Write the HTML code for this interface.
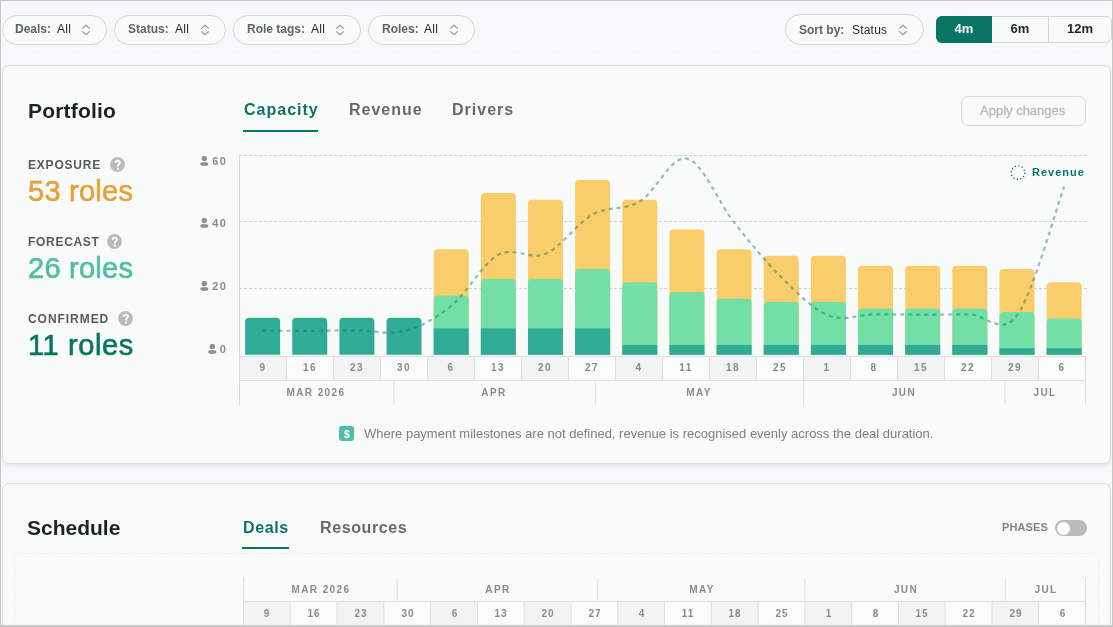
<!DOCTYPE html>
<html><head><meta charset="utf-8"><style>
html,body{margin:0;padding:0;}
body{width:1113px;height:627px;overflow:hidden;position:relative;background:#f6f9f9;font-family:"Liberation Sans", sans-serif;}
.t{position:absolute;white-space:nowrap;will-change:transform;}
.b{position:absolute;}
#frame{position:absolute;left:0;top:0;width:1113px;height:627px;box-sizing:border-box;border:1px solid #c6c8c8;border-bottom:2px solid #c9cbcb;pointer-events:none;}
</style></head><body>
<div class="b" style="left:2px;top:52px;width:1108px;height:0px;border-top:1px dashed #eff3f2;"></div><div class="b" style="left:2px;top:476px;width:1108px;height:0px;border-top:1px dashed #f1f4f4;"></div><div class="b" style="left:2px;top:15px;width:105px;height:30px;border:1px solid #d3d7d7;border-radius:15px;background:#f9fafa;box-sizing:border-box;"></div><div class="t" style="left:14.50px;top:22.84px;font-size:12px;line-height:12px;color:#5d6564;font-weight:bold;">Deals:</div><div class="t" style="left:57.00px;top:22.84px;font-size:12px;line-height:12px;color:#1e2626;font-weight:normal;letter-spacing:0.3px;">All</div><svg class="b" style="left:81px;top:24px" width="10" height="12" viewBox="0 0 10 12"><path d="M1.2 4.6 L5 1.3 L8.8 4.6 M1.2 7.4 L5 10.7 L8.8 7.4" fill="none" stroke="#8c9392" stroke-width="1.1"/></svg><div class="b" style="left:114px;top:15px;width:112px;height:30px;border:1px solid #d3d7d7;border-radius:15px;background:#f9fafa;box-sizing:border-box;"></div><div class="t" style="left:127.60px;top:22.84px;font-size:12px;line-height:12px;color:#5d6564;font-weight:bold;">Status:</div><div class="t" style="left:175.40px;top:22.84px;font-size:12px;line-height:12px;color:#1e2626;font-weight:normal;letter-spacing:0.3px;">All</div><svg class="b" style="left:200px;top:24px" width="10" height="12" viewBox="0 0 10 12"><path d="M1.2 4.6 L5 1.3 L8.8 4.6 M1.2 7.4 L5 10.7 L8.8 7.4" fill="none" stroke="#8c9392" stroke-width="1.1"/></svg><div class="b" style="left:233px;top:15px;width:128px;height:30px;border:1px solid #d3d7d7;border-radius:15px;background:#f9fafa;box-sizing:border-box;"></div><div class="t" style="left:246.70px;top:22.84px;font-size:12px;line-height:12px;color:#5d6564;font-weight:bold;">Role tags:</div><div class="t" style="left:310.70px;top:22.84px;font-size:12px;line-height:12px;color:#1e2626;font-weight:normal;letter-spacing:0.3px;">All</div><svg class="b" style="left:335px;top:24px" width="10" height="12" viewBox="0 0 10 12"><path d="M1.2 4.6 L5 1.3 L8.8 4.6 M1.2 7.4 L5 10.7 L8.8 7.4" fill="none" stroke="#8c9392" stroke-width="1.1"/></svg><div class="b" style="left:368px;top:15px;width:107px;height:30px;border:1px solid #d3d7d7;border-radius:15px;background:#f9fafa;box-sizing:border-box;"></div><div class="t" style="left:382.00px;top:22.84px;font-size:12px;line-height:12px;color:#5d6564;font-weight:bold;">Roles:</div><div class="t" style="left:424.00px;top:22.84px;font-size:12px;line-height:12px;color:#1e2626;font-weight:normal;letter-spacing:0.3px;">All</div><svg class="b" style="left:449px;top:24px" width="10" height="12" viewBox="0 0 10 12"><path d="M1.2 4.6 L5 1.3 L8.8 4.6 M1.2 7.4 L5 10.7 L8.8 7.4" fill="none" stroke="#8c9392" stroke-width="1.1"/></svg><div class="b" style="left:785px;top:14px;width:139px;height:31px;border:1px solid #d3d7d7;border-radius:16px;background:#f9fafa;box-sizing:border-box;"></div><div class="t" style="left:798.70px;top:23.84px;font-size:12px;line-height:12px;color:#5d6564;font-weight:bold;">Sort by:</div><div class="t" style="left:851.90px;top:23.84px;font-size:12px;line-height:12px;color:#1e2626;font-weight:normal;letter-spacing:0.2px;">Status</div><svg class="b" style="left:898px;top:24px" width="10" height="12" viewBox="0 0 10 12"><path d="M1.2 4.6 L5 1.3 L8.8 4.6 M1.2 7.4 L5 10.7 L8.8 7.4" fill="none" stroke="#8c9392" stroke-width="1.1"/></svg><div class="b" style="left:936px;top:16px;width:176px;height:27px;border:1px solid #d3d7d7;border-radius:6px;background:#f9fafa;box-sizing:border-box;"></div><div class="b" style="left:936px;top:16px;width:56px;height:27px;background:#077561;border-radius:6px 0 0 6px;"></div><div class="b" style="left:1048px;top:16px;width:1px;height:27px;background:#d3d7d7;"></div><div class="t" style="left:764.00px;width:400px;text-align:center;top:21.80px;font-size:13px;line-height:13px;color:#ffffff;font-weight:bold;">4m</div><div class="t" style="left:820.00px;width:400px;text-align:center;top:21.80px;font-size:13px;line-height:13px;color:#1e2626;font-weight:bold;">6m</div><div class="t" style="left:880.00px;width:400px;text-align:center;top:21.80px;font-size:13px;line-height:13px;color:#1e2626;font-weight:bold;">12m</div><div class="b" style="left:2px;top:65px;width:1109px;height:398.5px;border:1px solid #dadede;border-radius:7px;background:#f9fbfb;box-sizing:border-box;box-shadow:0 2px 5px rgba(0,0,0,0.08);"></div><div class="t" style="left:28.30px;top:100.02px;font-size:21px;line-height:21px;color:#1b2322;font-weight:bold;letter-spacing:0.2px;">Portfolio</div><div class="t" style="left:243.50px;top:101.86px;font-size:16px;line-height:16px;color:#0b7563;font-weight:bold;letter-spacing:1px;">Capacity</div><div class="b" style="left:243px;top:130px;width:75px;height:2px;background:#0b7563;"></div><div class="t" style="left:348.50px;top:101.86px;font-size:16px;line-height:16px;color:#646b6a;font-weight:bold;letter-spacing:1px;">Revenue</div><div class="t" style="left:452.00px;top:101.86px;font-size:16px;line-height:16px;color:#646b6a;font-weight:bold;letter-spacing:1px;">Drivers</div><div class="b" style="left:961px;top:96px;width:125px;height:30px;border:1px solid #d6dada;border-radius:7px;box-sizing:border-box;"></div><div class="t" style="left:980.40px;top:103.50px;font-size:13px;line-height:13px;color:#b5bab9;font-weight:normal;-webkit-text-stroke:0.3px #b5bab9;">Apply changes</div><div class="t" style="left:28.00px;top:158.74px;font-size:12px;line-height:12px;color:#545c5b;font-weight:bold;letter-spacing:0.8px;">EXPOSURE</div><svg class="b" style="left:109.6px;top:157.2px" width="15" height="15" viewBox="0 0 15 15"><circle cx="7.5" cy="7.5" r="7.4" fill="#b7bbba"/><path d="M5.7 5.8 C5.7 4.4 6.6 3.6 7.8 3.6 C9.0 3.6 9.9 4.4 9.9 5.6 C9.9 7.1 7.9 7.3 7.9 8.9 L7.9 9.4" fill="none" stroke="#fff" stroke-width="1.8"/><circle cx="7.9" cy="11.6" r="1.15" fill="#fff"/></svg><div class="t" style="left:27.50px;top:177.15px;font-size:29px;line-height:29px;color:#e3a33b;font-weight:normal;letter-spacing:0.25px;-webkit-text-stroke:0.65px #e3a33b;">53 roles</div><div class="t" style="left:28.00px;top:235.94px;font-size:12px;line-height:12px;color:#545c5b;font-weight:bold;letter-spacing:0.7px;">FORECAST</div><svg class="b" style="left:106.6px;top:233.9px" width="15" height="15" viewBox="0 0 15 15"><circle cx="7.5" cy="7.5" r="7.4" fill="#b7bbba"/><path d="M5.7 5.8 C5.7 4.4 6.6 3.6 7.8 3.6 C9.0 3.6 9.9 4.4 9.9 5.6 C9.9 7.1 7.9 7.3 7.9 8.9 L7.9 9.4" fill="none" stroke="#fff" stroke-width="1.8"/><circle cx="7.9" cy="11.6" r="1.15" fill="#fff"/></svg><div class="t" style="left:27.50px;top:253.85px;font-size:29px;line-height:29px;color:#4fbea4;font-weight:normal;letter-spacing:0.25px;-webkit-text-stroke:0.65px #4fbea4;">26 roles</div><div class="t" style="left:28.00px;top:313.04px;font-size:12px;line-height:12px;color:#545c5b;font-weight:bold;letter-spacing:0.95px;">CONFIRMED</div><svg class="b" style="left:117.6px;top:311.4px" width="15" height="15" viewBox="0 0 15 15"><circle cx="7.5" cy="7.5" r="7.4" fill="#b7bbba"/><path d="M5.7 5.8 C5.7 4.4 6.6 3.6 7.8 3.6 C9.0 3.6 9.9 4.4 9.9 5.6 C9.9 7.1 7.9 7.3 7.9 8.9 L7.9 9.4" fill="none" stroke="#fff" stroke-width="1.8"/><circle cx="7.9" cy="11.6" r="1.15" fill="#fff"/></svg><div class="t" style="left:27.50px;top:331.25px;font-size:29px;line-height:29px;color:#0b7563;font-weight:normal;letter-spacing:0.6px;-webkit-text-stroke:0.65px #0b7563;">11 roles</div><svg class="b" style="left:0;top:0" width="1113" height="627"><line x1="239" y1="155.5" x2="1088" y2="155.5" stroke="#ced2d2" stroke-width="1" stroke-dasharray="3 2"/><line x1="239" y1="221.5" x2="1088" y2="221.5" stroke="#ced2d2" stroke-width="1" stroke-dasharray="3 2"/><line x1="239" y1="288.5" x2="1088" y2="288.5" stroke="#ced2d2" stroke-width="1" stroke-dasharray="3 2"/><line x1="239.5" y1="155" x2="239.5" y2="405" stroke="#d5d9d9" stroke-width="1"/><path d="M245.1 354.8 L245.1 321.68 Q245.1 317.68 249.1 317.68 L276.1 317.68 Q280.1 317.68 280.1 321.68 L280.1 354.8 Z" fill="#30ab96"/><path d="M292.25 354.8 L292.25 321.68 Q292.25 317.68 296.25 317.68 L323.25 317.68 Q327.25 317.68 327.25 321.68 L327.25 354.8 Z" fill="#30ab96"/><path d="M339.4 354.8 L339.4 321.68 Q339.4 317.68 343.4 317.68 L370.4 317.68 Q374.4 317.68 374.4 321.68 L374.4 354.8 Z" fill="#30ab96"/><path d="M386.55 354.8 L386.55 321.68 Q386.55 317.68 390.55 317.68 L417.55 317.68 Q421.55 317.68 421.55 321.68 L421.55 354.8 Z" fill="#30ab96"/><path d="M433.7 354.79999999999995 L433.7 253.2 Q433.7 249.2 437.7 249.2 L464.7 249.2 Q468.7 249.2 468.7 253.2 L468.7 354.79999999999995 Z" fill="#f9cd6a"/><path d="M433.7 354.79999999999995 L433.7 299.4 Q433.7 295.4 437.7 295.4 L464.7 295.4 Q468.7 295.4 468.7 299.4 L468.7 354.79999999999995 Z" fill="#72dfa7"/><rect x="433.70" y="328.40" width="35" height="26.40" fill="#30ab96"/><path d="M480.85 354.79999999999995 L480.85 197.1 Q480.85 193.1 484.85 193.1 L511.85 193.1 Q515.85 193.1 515.85 197.1 L515.85 354.79999999999995 Z" fill="#f9cd6a"/><path d="M480.85 354.79999999999995 L480.85 282.9 Q480.85 278.9 484.85 278.9 L511.85 278.9 Q515.85 278.9 515.85 282.9 L515.85 354.79999999999995 Z" fill="#72dfa7"/><rect x="480.85" y="328.40" width="35" height="26.40" fill="#30ab96"/><path d="M528.0 354.79999999999995 L528.0 203.7 Q528.0 199.7 532.0 199.7 L559.0 199.7 Q563.0 199.7 563.0 203.7 L563.0 354.79999999999995 Z" fill="#f9cd6a"/><path d="M528.0 354.79999999999995 L528.0 282.9 Q528.0 278.9 532.0 278.9 L559.0 278.9 Q563.0 278.9 563.0 282.9 L563.0 354.79999999999995 Z" fill="#72dfa7"/><rect x="528.00" y="328.40" width="35" height="26.40" fill="#30ab96"/><path d="M575.15 354.8 L575.15 183.9 Q575.15 179.9 579.15 179.9 L606.15 179.9 Q610.15 179.9 610.15 183.9 L610.15 354.8 Z" fill="#f9cd6a"/><path d="M575.15 354.8 L575.15 273.0 Q575.15 269.0 579.15 269.0 L606.15 269.0 Q610.15 269.0 610.15 273.0 L610.15 354.8 Z" fill="#72dfa7"/><rect x="575.15" y="328.40" width="35" height="26.40" fill="#30ab96"/><path d="M622.3 354.79999999999995 L622.3 203.7 Q622.3 199.7 626.3 199.7 L653.3 199.7 Q657.3 199.7 657.3 203.7 L657.3 354.79999999999995 Z" fill="#f9cd6a"/><path d="M622.3 354.79999999999995 L622.3 286.2 Q622.3 282.2 626.3 282.2 L653.3 282.2 Q657.3 282.2 657.3 286.2 L657.3 354.79999999999995 Z" fill="#72dfa7"/><rect x="622.30" y="344.90" width="35" height="9.90" fill="#30ab96"/><path d="M669.45 354.8 L669.45 233.4 Q669.45 229.4 673.45 229.4 L700.45 229.4 Q704.45 229.4 704.45 233.4 L704.45 354.8 Z" fill="#f9cd6a"/><path d="M669.45 354.8 L669.45 296.1 Q669.45 292.1 673.45 292.1 L700.45 292.1 Q704.45 292.1 704.45 296.1 L704.45 354.8 Z" fill="#72dfa7"/><rect x="669.45" y="344.90" width="35" height="9.90" fill="#30ab96"/><path d="M716.6 354.79999999999995 L716.6 253.2 Q716.6 249.2 720.6 249.2 L747.6 249.2 Q751.6 249.2 751.6 253.2 L751.6 354.79999999999995 Z" fill="#f9cd6a"/><path d="M716.6 354.8 L716.6 302.7 Q716.6 298.7 720.6 298.7 L747.6 298.7 Q751.6 298.7 751.6 302.7 L751.6 354.8 Z" fill="#72dfa7"/><rect x="716.60" y="344.90" width="35" height="9.90" fill="#30ab96"/><path d="M763.75 354.8 L763.75 259.8 Q763.75 255.8 767.75 255.8 L794.75 255.8 Q798.75 255.8 798.75 259.8 L798.75 354.8 Z" fill="#f9cd6a"/><path d="M763.75 354.8 L763.75 306.0 Q763.75 302.0 767.75 302.0 L794.75 302.0 Q798.75 302.0 798.75 306.0 L798.75 354.8 Z" fill="#72dfa7"/><rect x="763.75" y="344.90" width="35" height="9.90" fill="#30ab96"/><path d="M810.9 354.8 L810.9 259.8 Q810.9 255.8 814.9 255.8 L841.9 255.8 Q845.9 255.8 845.9 259.8 L845.9 354.8 Z" fill="#f9cd6a"/><path d="M810.9 354.8 L810.9 306.0 Q810.9 302.0 814.9 302.0 L841.9 302.0 Q845.9 302.0 845.9 306.0 L845.9 354.8 Z" fill="#72dfa7"/><rect x="810.90" y="344.90" width="35" height="9.90" fill="#30ab96"/><path d="M858.05 354.79999999999995 L858.05 269.7 Q858.05 265.7 862.05 265.7 L889.05 265.7 Q893.05 265.7 893.05 269.7 L893.05 354.79999999999995 Z" fill="#f9cd6a"/><path d="M858.05 354.8 L858.05 312.6 Q858.05 308.6 862.05 308.6 L889.05 308.6 Q893.05 308.6 893.05 312.6 L893.05 354.8 Z" fill="#72dfa7"/><rect x="858.05" y="344.90" width="35" height="9.90" fill="#30ab96"/><path d="M905.2 354.79999999999995 L905.2 269.7 Q905.2 265.7 909.2 265.7 L936.2 265.7 Q940.2 265.7 940.2 269.7 L940.2 354.79999999999995 Z" fill="#f9cd6a"/><path d="M905.2 354.8 L905.2 312.6 Q905.2 308.6 909.2 308.6 L936.2 308.6 Q940.2 308.6 940.2 312.6 L940.2 354.8 Z" fill="#72dfa7"/><rect x="905.20" y="344.90" width="35" height="9.90" fill="#30ab96"/><path d="M952.35 354.79999999999995 L952.35 269.7 Q952.35 265.7 956.35 265.7 L983.35 265.7 Q987.35 265.7 987.35 269.7 L987.35 354.79999999999995 Z" fill="#f9cd6a"/><path d="M952.35 354.8 L952.35 312.6 Q952.35 308.6 956.35 308.6 L983.35 308.6 Q987.35 308.6 987.35 312.6 L987.35 354.8 Z" fill="#72dfa7"/><rect x="952.35" y="344.90" width="35" height="9.90" fill="#30ab96"/><path d="M999.5 354.8 L999.5 273.0 Q999.5 269.0 1003.5 269.0 L1030.5 269.0 Q1034.5 269.0 1034.5 273.0 L1034.5 354.8 Z" fill="#f9cd6a"/><path d="M999.5 354.79999999999995 L999.5 315.9 Q999.5 311.9 1003.5 311.9 L1030.5 311.9 Q1034.5 311.9 1034.5 315.9 L1034.5 354.79999999999995 Z" fill="#72dfa7"/><rect x="999.50" y="348.20" width="35" height="6.60" fill="#30ab96"/><path d="M1046.65 354.79999999999995 L1046.65 286.2 Q1046.65 282.2 1050.65 282.2 L1077.65 282.2 Q1081.65 282.2 1081.65 286.2 L1081.65 354.79999999999995 Z" fill="#f9cd6a"/><path d="M1046.65 354.8 L1046.65 322.5 Q1046.65 318.5 1050.65 318.5 L1077.65 318.5 Q1081.65 318.5 1081.65 322.5 L1081.65 354.8 Z" fill="#72dfa7"/><rect x="1046.65" y="348.20" width="35" height="6.60" fill="#30ab96"/><rect x="239.50" y="356" width="47.00" height="24" fill="#f2f4f4"/><rect x="286.50" y="356" width="47.00" height="24" fill="#fafcfc"/><rect x="333.50" y="356" width="47.00" height="24" fill="#f2f4f4"/><rect x="380.50" y="356" width="47.00" height="24" fill="#fafcfc"/><rect x="427.50" y="356" width="47.00" height="24" fill="#f2f4f4"/><rect x="474.50" y="356" width="47.00" height="24" fill="#fafcfc"/><rect x="521.50" y="356" width="47.00" height="24" fill="#f2f4f4"/><rect x="568.50" y="356" width="47.00" height="24" fill="#fafcfc"/><rect x="615.50" y="356" width="47.00" height="24" fill="#f2f4f4"/><rect x="662.50" y="356" width="47.00" height="24" fill="#fafcfc"/><rect x="709.50" y="356" width="47.00" height="24" fill="#f2f4f4"/><rect x="756.50" y="356" width="47.00" height="24" fill="#fafcfc"/><rect x="803.50" y="356" width="47.00" height="24" fill="#f2f4f4"/><rect x="850.50" y="356" width="47.00" height="24" fill="#fafcfc"/><rect x="897.50" y="356" width="47.00" height="24" fill="#f2f4f4"/><rect x="944.50" y="356" width="47.00" height="24" fill="#fafcfc"/><rect x="991.50" y="356" width="47.00" height="24" fill="#f2f4f4"/><rect x="1038.50" y="356" width="47.00" height="24" fill="#fafcfc"/><line x1="239.50" y1="356" x2="239.50" y2="380" stroke="#dde0e0" stroke-width="1"/><line x1="286.50" y1="356" x2="286.50" y2="380" stroke="#dde0e0" stroke-width="1"/><line x1="333.50" y1="356" x2="333.50" y2="380" stroke="#dde0e0" stroke-width="1"/><line x1="380.50" y1="356" x2="380.50" y2="380" stroke="#dde0e0" stroke-width="1"/><line x1="427.50" y1="356" x2="427.50" y2="380" stroke="#dde0e0" stroke-width="1"/><line x1="474.50" y1="356" x2="474.50" y2="380" stroke="#dde0e0" stroke-width="1"/><line x1="521.50" y1="356" x2="521.50" y2="380" stroke="#dde0e0" stroke-width="1"/><line x1="568.50" y1="356" x2="568.50" y2="380" stroke="#dde0e0" stroke-width="1"/><line x1="615.50" y1="356" x2="615.50" y2="380" stroke="#dde0e0" stroke-width="1"/><line x1="662.50" y1="356" x2="662.50" y2="380" stroke="#dde0e0" stroke-width="1"/><line x1="709.50" y1="356" x2="709.50" y2="380" stroke="#dde0e0" stroke-width="1"/><line x1="756.50" y1="356" x2="756.50" y2="380" stroke="#dde0e0" stroke-width="1"/><line x1="803.50" y1="356" x2="803.50" y2="380" stroke="#dde0e0" stroke-width="1"/><line x1="850.50" y1="356" x2="850.50" y2="380" stroke="#dde0e0" stroke-width="1"/><line x1="897.50" y1="356" x2="897.50" y2="380" stroke="#dde0e0" stroke-width="1"/><line x1="944.50" y1="356" x2="944.50" y2="380" stroke="#dde0e0" stroke-width="1"/><line x1="991.50" y1="356" x2="991.50" y2="380" stroke="#dde0e0" stroke-width="1"/><line x1="1038.50" y1="356" x2="1038.50" y2="380" stroke="#dde0e0" stroke-width="1"/><line x1="1085.50" y1="356" x2="1085.50" y2="380" stroke="#dde0e0" stroke-width="1"/><line x1="240" y1="356.5" x2="1085.5" y2="356.5" stroke="#dde0e0" stroke-width="1"/><line x1="240" y1="380.5" x2="1085.5" y2="380.5" stroke="#dde0e0" stroke-width="1"/><line x1="393.93" y1="380" x2="393.93" y2="405" stroke="#dde0e0" stroke-width="1"/><line x1="595.36" y1="380" x2="595.36" y2="405" stroke="#dde0e0" stroke-width="1"/><line x1="803.50" y1="380" x2="803.50" y2="405" stroke="#dde0e0" stroke-width="1"/><line x1="1004.93" y1="380" x2="1004.93" y2="405" stroke="#dde0e0" stroke-width="1"/><line x1="1085.50" y1="380" x2="1085.50" y2="405" stroke="#dde0e0" stroke-width="1"/><path d="M262.60 330.60 C270.46 330.63 294.03 330.85 309.75 330.80 C325.47 330.75 341.18 330.27 356.90 330.30 C372.62 330.33 388.33 335.05 404.05 331.00 C419.77 326.95 435.48 318.70 451.20 306.00 C466.92 293.30 482.63 263.50 498.35 254.80 C514.07 246.10 529.78 260.52 545.50 253.80 C561.22 247.08 576.93 223.22 592.65 214.50 C608.37 205.78 624.08 210.82 639.80 201.50 C655.52 192.18 671.23 155.12 686.95 158.60 C702.67 162.08 718.38 202.63 734.10 222.40 C749.82 242.17 765.53 261.70 781.25 277.20 C796.97 292.70 812.68 309.22 828.40 315.40 C844.12 321.58 859.83 314.43 875.55 314.30 C891.27 314.17 906.98 314.57 922.70 314.60 C938.42 314.63 954.13 314.37 969.85 314.50 C985.57 314.63 1001.28 336.70 1017.00 315.40 C1032.72 294.10 1056.29 208.15 1064.15 186.70" fill="none" stroke="rgba(11,122,102,0.46)" stroke-width="2.2" stroke-dasharray="4 4"/><circle cx="1018" cy="172.6" r="6.8" fill="none" stroke="#0b7563" stroke-width="1.3" stroke-dasharray="1.3 2.26"/></svg><div class="t" style="left:1031.50px;top:166.69px;font-size:11px;line-height:11px;color:#0b7563;font-weight:bold;letter-spacing:1px;">Revenue</div><div class="t" style="left:-173.00px;width:400px;text-align:right;top:156.29px;font-size:11px;line-height:11px;color:#858c8b;font-weight:bold;letter-spacing:1.2px;">60</div><svg class="b" style="left:199.5px;top:156px" width="9" height="10" viewBox="0 0 9 10"><circle cx="4.3" cy="2.5" r="2.7" fill="#8d9392"/><ellipse cx="4.3" cy="8" rx="4.1" ry="1.9" fill="#8d9392"/></svg><div class="t" style="left:-173.00px;width:400px;text-align:right;top:218.09px;font-size:11px;line-height:11px;color:#858c8b;font-weight:bold;letter-spacing:1.2px;">40</div><svg class="b" style="left:199.5px;top:217.8px" width="9" height="10" viewBox="0 0 9 10"><circle cx="4.3" cy="2.5" r="2.7" fill="#8d9392"/><ellipse cx="4.3" cy="8" rx="4.1" ry="1.9" fill="#8d9392"/></svg><div class="t" style="left:-173.00px;width:400px;text-align:right;top:280.89px;font-size:11px;line-height:11px;color:#858c8b;font-weight:bold;letter-spacing:1.2px;">20</div><svg class="b" style="left:199.5px;top:280.6px" width="9" height="10" viewBox="0 0 9 10"><circle cx="4.3" cy="2.5" r="2.7" fill="#8d9392"/><ellipse cx="4.3" cy="8" rx="4.1" ry="1.9" fill="#8d9392"/></svg><div class="t" style="left:-173.00px;width:400px;text-align:right;top:344.29px;font-size:11px;line-height:11px;color:#858c8b;font-weight:bold;letter-spacing:1.2px;">0</div><svg class="b" style="left:207.7px;top:344px" width="9" height="10" viewBox="0 0 9 10"><circle cx="4.3" cy="2.5" r="2.7" fill="#8d9392"/><ellipse cx="4.3" cy="8" rx="4.1" ry="1.9" fill="#8d9392"/></svg><div class="t" style="left:63.00px;width:400px;text-align:center;top:363.14px;font-size:10px;line-height:10px;color:#868d8c;font-weight:bold;letter-spacing:1.4px;">9</div><div class="t" style="left:110.00px;width:400px;text-align:center;top:363.14px;font-size:10px;line-height:10px;color:#868d8c;font-weight:bold;letter-spacing:1.4px;">16</div><div class="t" style="left:157.00px;width:400px;text-align:center;top:363.14px;font-size:10px;line-height:10px;color:#868d8c;font-weight:bold;letter-spacing:1.4px;">23</div><div class="t" style="left:204.00px;width:400px;text-align:center;top:363.14px;font-size:10px;line-height:10px;color:#868d8c;font-weight:bold;letter-spacing:1.4px;">30</div><div class="t" style="left:251.00px;width:400px;text-align:center;top:363.14px;font-size:10px;line-height:10px;color:#868d8c;font-weight:bold;letter-spacing:1.4px;">6</div><div class="t" style="left:298.00px;width:400px;text-align:center;top:363.14px;font-size:10px;line-height:10px;color:#868d8c;font-weight:bold;letter-spacing:1.4px;">13</div><div class="t" style="left:345.00px;width:400px;text-align:center;top:363.14px;font-size:10px;line-height:10px;color:#868d8c;font-weight:bold;letter-spacing:1.4px;">20</div><div class="t" style="left:392.00px;width:400px;text-align:center;top:363.14px;font-size:10px;line-height:10px;color:#868d8c;font-weight:bold;letter-spacing:1.4px;">27</div><div class="t" style="left:439.00px;width:400px;text-align:center;top:363.14px;font-size:10px;line-height:10px;color:#868d8c;font-weight:bold;letter-spacing:1.4px;">4</div><div class="t" style="left:486.00px;width:400px;text-align:center;top:363.14px;font-size:10px;line-height:10px;color:#868d8c;font-weight:bold;letter-spacing:1.4px;">11</div><div class="t" style="left:533.00px;width:400px;text-align:center;top:363.14px;font-size:10px;line-height:10px;color:#868d8c;font-weight:bold;letter-spacing:1.4px;">18</div><div class="t" style="left:580.00px;width:400px;text-align:center;top:363.14px;font-size:10px;line-height:10px;color:#868d8c;font-weight:bold;letter-spacing:1.4px;">25</div><div class="t" style="left:627.00px;width:400px;text-align:center;top:363.14px;font-size:10px;line-height:10px;color:#868d8c;font-weight:bold;letter-spacing:1.4px;">1</div><div class="t" style="left:674.00px;width:400px;text-align:center;top:363.14px;font-size:10px;line-height:10px;color:#868d8c;font-weight:bold;letter-spacing:1.4px;">8</div><div class="t" style="left:721.00px;width:400px;text-align:center;top:363.14px;font-size:10px;line-height:10px;color:#868d8c;font-weight:bold;letter-spacing:1.4px;">15</div><div class="t" style="left:768.00px;width:400px;text-align:center;top:363.14px;font-size:10px;line-height:10px;color:#868d8c;font-weight:bold;letter-spacing:1.4px;">22</div><div class="t" style="left:815.00px;width:400px;text-align:center;top:363.14px;font-size:10px;line-height:10px;color:#868d8c;font-weight:bold;letter-spacing:1.4px;">29</div><div class="t" style="left:862.00px;width:400px;text-align:center;top:363.14px;font-size:10px;line-height:10px;color:#868d8c;font-weight:bold;letter-spacing:1.4px;">6</div><div class="t" style="left:116.41px;width:400px;text-align:center;top:387.54px;font-size:10px;line-height:10px;color:#868d8c;font-weight:bold;letter-spacing:1.4px;">MAR 2026</div><div class="t" style="left:294.34px;width:400px;text-align:center;top:387.54px;font-size:10px;line-height:10px;color:#868d8c;font-weight:bold;letter-spacing:1.4px;">APR</div><div class="t" style="left:499.13px;width:400px;text-align:center;top:387.54px;font-size:10px;line-height:10px;color:#868d8c;font-weight:bold;letter-spacing:1.4px;">MAY</div><div class="t" style="left:703.91px;width:400px;text-align:center;top:387.54px;font-size:10px;line-height:10px;color:#868d8c;font-weight:bold;letter-spacing:1.4px;">JUN</div><div class="t" style="left:844.91px;width:400px;text-align:center;top:387.54px;font-size:10px;line-height:10px;color:#868d8c;font-weight:bold;letter-spacing:1.4px;">JUL</div><div class="b" style="left:339.3px;top:426.3px;width:15px;height:15px;background:#4dbda3;border-radius:3px;"></div><div class="t" style="left:147.00px;width:400px;text-align:center;top:428.71px;font-size:10.5px;line-height:10.5px;color:#ffffff;font-weight:bold;">$</div><div class="t" style="left:364.00px;top:427.30px;font-size:13px;line-height:13px;color:#798180;font-weight:normal;">Where payment milestones are not defined, revenue is recognised evenly across the deal duration.</div><div class="b" style="left:2px;top:483px;width:1109px;height:200px;border:1px solid #dadede;border-radius:7px;background:#f9fbfb;box-sizing:border-box;"></div><div class="b" style="left:14px;top:553px;width:1085px;height:100px;border:1px dashed #eef1f1;border-radius:6px;box-sizing:border-box;"></div><div class="t" style="left:27.00px;top:517.42px;font-size:21px;line-height:21px;color:#1b2322;font-weight:bold;">Schedule</div><div class="t" style="left:242.80px;top:519.96px;font-size:16px;line-height:16px;color:#0b7563;font-weight:bold;letter-spacing:0.6px;">Deals</div><div class="b" style="left:242px;top:547px;width:47px;height:2px;background:#0b7563;"></div><div class="t" style="left:319.60px;top:519.96px;font-size:16px;line-height:16px;color:#646b6a;font-weight:bold;letter-spacing:0.6px;">Resources</div><div class="t" style="left:1002.00px;top:521.69px;font-size:11px;line-height:11px;color:#7f8786;font-weight:bold;letter-spacing:0.12px;">PHASES</div><div class="b" style="left:1055px;top:520px;width:32px;height:16px;background:#b8bcbb;border-radius:8px;"></div><div class="b" style="left:1056.5px;top:521.5px;width:13px;height:13px;background:#ffffff;border-radius:50%;"></div><svg class="b" style="left:0;top:0" width="1113" height="627"><rect x="243.50" y="602" width="46.78" height="25" fill="#f2f4f4"/><rect x="290.28" y="602" width="46.78" height="25" fill="#fafcfc"/><rect x="337.06" y="602" width="46.78" height="25" fill="#f2f4f4"/><rect x="383.83" y="602" width="46.78" height="25" fill="#fafcfc"/><rect x="430.61" y="602" width="46.78" height="25" fill="#f2f4f4"/><rect x="477.39" y="602" width="46.78" height="25" fill="#fafcfc"/><rect x="524.17" y="602" width="46.78" height="25" fill="#f2f4f4"/><rect x="570.94" y="602" width="46.78" height="25" fill="#fafcfc"/><rect x="617.72" y="602" width="46.78" height="25" fill="#f2f4f4"/><rect x="664.50" y="602" width="46.78" height="25" fill="#fafcfc"/><rect x="711.28" y="602" width="46.78" height="25" fill="#f2f4f4"/><rect x="758.06" y="602" width="46.78" height="25" fill="#fafcfc"/><rect x="804.83" y="602" width="46.78" height="25" fill="#f2f4f4"/><rect x="851.61" y="602" width="46.78" height="25" fill="#fafcfc"/><rect x="898.39" y="602" width="46.78" height="25" fill="#f2f4f4"/><rect x="945.17" y="602" width="46.78" height="25" fill="#fafcfc"/><rect x="991.94" y="602" width="46.78" height="25" fill="#f2f4f4"/><rect x="1038.72" y="602" width="46.78" height="25" fill="#fafcfc"/><line x1="243.50" y1="602" x2="243.50" y2="627" stroke="#dde0e0" stroke-width="1"/><line x1="290.28" y1="602" x2="290.28" y2="627" stroke="#dde0e0" stroke-width="1"/><line x1="337.06" y1="602" x2="337.06" y2="627" stroke="#dde0e0" stroke-width="1"/><line x1="383.83" y1="602" x2="383.83" y2="627" stroke="#dde0e0" stroke-width="1"/><line x1="430.61" y1="602" x2="430.61" y2="627" stroke="#dde0e0" stroke-width="1"/><line x1="477.39" y1="602" x2="477.39" y2="627" stroke="#dde0e0" stroke-width="1"/><line x1="524.17" y1="602" x2="524.17" y2="627" stroke="#dde0e0" stroke-width="1"/><line x1="570.94" y1="602" x2="570.94" y2="627" stroke="#dde0e0" stroke-width="1"/><line x1="617.72" y1="602" x2="617.72" y2="627" stroke="#dde0e0" stroke-width="1"/><line x1="664.50" y1="602" x2="664.50" y2="627" stroke="#dde0e0" stroke-width="1"/><line x1="711.28" y1="602" x2="711.28" y2="627" stroke="#dde0e0" stroke-width="1"/><line x1="758.06" y1="602" x2="758.06" y2="627" stroke="#dde0e0" stroke-width="1"/><line x1="804.83" y1="602" x2="804.83" y2="627" stroke="#dde0e0" stroke-width="1"/><line x1="851.61" y1="602" x2="851.61" y2="627" stroke="#dde0e0" stroke-width="1"/><line x1="898.39" y1="602" x2="898.39" y2="627" stroke="#dde0e0" stroke-width="1"/><line x1="945.17" y1="602" x2="945.17" y2="627" stroke="#dde0e0" stroke-width="1"/><line x1="991.94" y1="602" x2="991.94" y2="627" stroke="#dde0e0" stroke-width="1"/><line x1="1038.72" y1="602" x2="1038.72" y2="627" stroke="#dde0e0" stroke-width="1"/><line x1="1085.50" y1="602" x2="1085.50" y2="627" stroke="#dde0e0" stroke-width="1"/><line x1="243.5" y1="601.5" x2="1085.5" y2="601.5" stroke="#dde0e0" stroke-width="1"/><line x1="243.50" y1="578" x2="243.50" y2="602" stroke="#dde0e0" stroke-width="1"/><line x1="397.20" y1="578" x2="397.20" y2="602" stroke="#dde0e0" stroke-width="1"/><line x1="597.67" y1="578" x2="597.67" y2="602" stroke="#dde0e0" stroke-width="1"/><line x1="804.83" y1="578" x2="804.83" y2="602" stroke="#dde0e0" stroke-width="1"/><line x1="1005.31" y1="578" x2="1005.31" y2="602" stroke="#dde0e0" stroke-width="1"/><line x1="1085.50" y1="578" x2="1085.50" y2="602" stroke="#dde0e0" stroke-width="1"/></svg><div class="t" style="left:67.39px;width:400px;text-align:center;top:609.03px;font-size:10px;line-height:10px;color:#868d8c;font-weight:bold;letter-spacing:1px;">9</div><div class="t" style="left:114.17px;width:400px;text-align:center;top:609.03px;font-size:10px;line-height:10px;color:#868d8c;font-weight:bold;letter-spacing:1px;">16</div><div class="t" style="left:160.94px;width:400px;text-align:center;top:609.03px;font-size:10px;line-height:10px;color:#868d8c;font-weight:bold;letter-spacing:1px;">23</div><div class="t" style="left:207.72px;width:400px;text-align:center;top:609.03px;font-size:10px;line-height:10px;color:#868d8c;font-weight:bold;letter-spacing:1px;">30</div><div class="t" style="left:254.50px;width:400px;text-align:center;top:609.03px;font-size:10px;line-height:10px;color:#868d8c;font-weight:bold;letter-spacing:1px;">6</div><div class="t" style="left:301.28px;width:400px;text-align:center;top:609.03px;font-size:10px;line-height:10px;color:#868d8c;font-weight:bold;letter-spacing:1px;">13</div><div class="t" style="left:348.06px;width:400px;text-align:center;top:609.03px;font-size:10px;line-height:10px;color:#868d8c;font-weight:bold;letter-spacing:1px;">20</div><div class="t" style="left:394.83px;width:400px;text-align:center;top:609.03px;font-size:10px;line-height:10px;color:#868d8c;font-weight:bold;letter-spacing:1px;">27</div><div class="t" style="left:441.61px;width:400px;text-align:center;top:609.03px;font-size:10px;line-height:10px;color:#868d8c;font-weight:bold;letter-spacing:1px;">4</div><div class="t" style="left:488.39px;width:400px;text-align:center;top:609.03px;font-size:10px;line-height:10px;color:#868d8c;font-weight:bold;letter-spacing:1px;">11</div><div class="t" style="left:535.17px;width:400px;text-align:center;top:609.03px;font-size:10px;line-height:10px;color:#868d8c;font-weight:bold;letter-spacing:1px;">18</div><div class="t" style="left:581.94px;width:400px;text-align:center;top:609.03px;font-size:10px;line-height:10px;color:#868d8c;font-weight:bold;letter-spacing:1px;">25</div><div class="t" style="left:628.72px;width:400px;text-align:center;top:609.03px;font-size:10px;line-height:10px;color:#868d8c;font-weight:bold;letter-spacing:1px;">1</div><div class="t" style="left:675.50px;width:400px;text-align:center;top:609.03px;font-size:10px;line-height:10px;color:#868d8c;font-weight:bold;letter-spacing:1px;">8</div><div class="t" style="left:722.28px;width:400px;text-align:center;top:609.03px;font-size:10px;line-height:10px;color:#868d8c;font-weight:bold;letter-spacing:1px;">15</div><div class="t" style="left:769.06px;width:400px;text-align:center;top:609.03px;font-size:10px;line-height:10px;color:#868d8c;font-weight:bold;letter-spacing:1px;">22</div><div class="t" style="left:815.83px;width:400px;text-align:center;top:609.03px;font-size:10px;line-height:10px;color:#868d8c;font-weight:bold;letter-spacing:1px;">29</div><div class="t" style="left:862.61px;width:400px;text-align:center;top:609.03px;font-size:10px;line-height:10px;color:#868d8c;font-weight:bold;letter-spacing:1px;">6</div><div class="t" style="left:121.05px;width:400px;text-align:center;top:585.03px;font-size:10px;line-height:10px;color:#868d8c;font-weight:bold;letter-spacing:1.4px;">MAR 2026</div><div class="t" style="left:298.14px;width:400px;text-align:center;top:585.03px;font-size:10px;line-height:10px;color:#868d8c;font-weight:bold;letter-spacing:1.4px;">APR</div><div class="t" style="left:501.95px;width:400px;text-align:center;top:585.03px;font-size:10px;line-height:10px;color:#868d8c;font-weight:bold;letter-spacing:1.4px;">MAY</div><div class="t" style="left:705.77px;width:400px;text-align:center;top:585.03px;font-size:10px;line-height:10px;color:#868d8c;font-weight:bold;letter-spacing:1.4px;">JUN</div><div class="t" style="left:846.10px;width:400px;text-align:center;top:585.03px;font-size:10px;line-height:10px;color:#868d8c;font-weight:bold;letter-spacing:1.4px;">JUL</div>
<div id="frame"></div>
</body></html>
